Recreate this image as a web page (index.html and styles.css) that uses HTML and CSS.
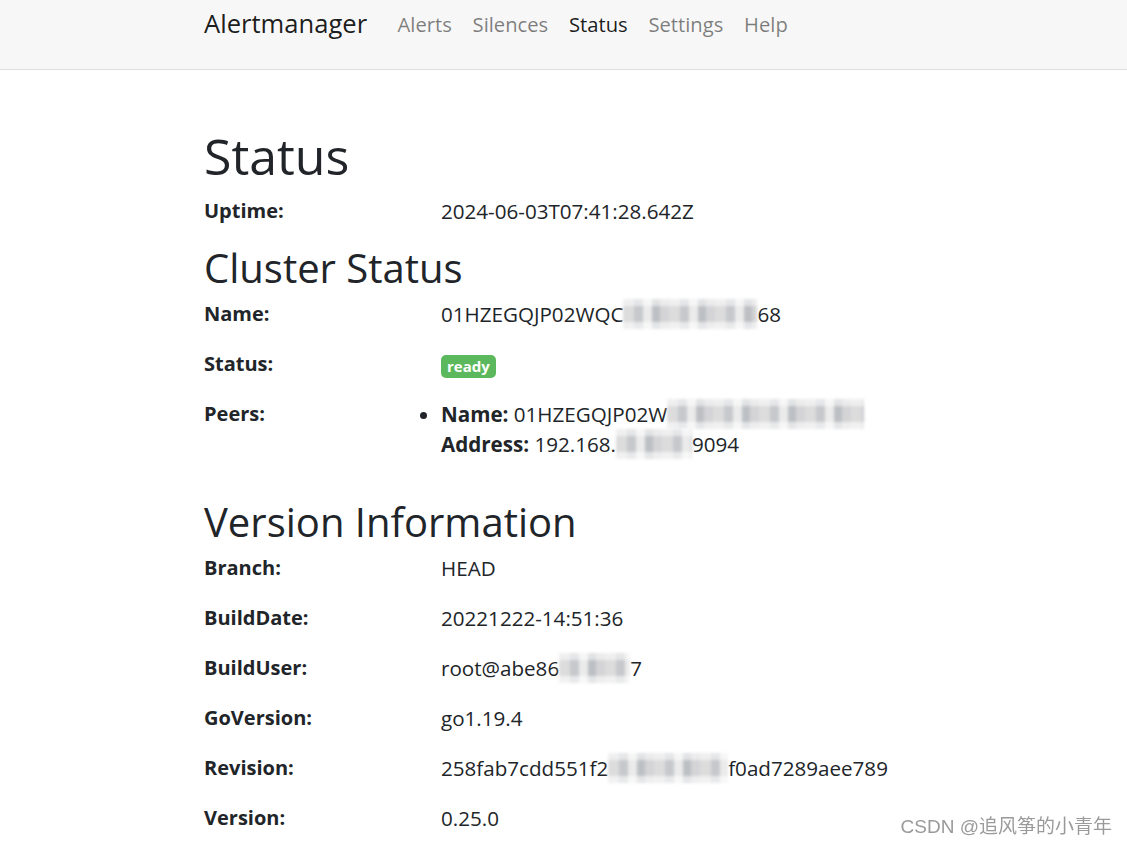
FILE: index.html
```html
<!DOCTYPE html>
<html lang="en">
<head>
<meta charset="utf-8">
<title>Alertmanager</title>
<link rel="stylesheet" href="styles.css">
</head>
<body>
<nav class="navbar">
  <div class="container nav-inner">
    <a class="brand" href="#">Alertmanager</a>
    <ul class="nav">
      <li><a class="nav-link" href="#">Alerts</a></li>
      <li><a class="nav-link" href="#">Silences</a></li>
      <li><a class="nav-link active" href="#">Status</a></li>
      <li><a class="nav-link" href="#">Settings</a></li>
      <li><a class="nav-link" href="#">Help</a></li>
    </ul>
  </div>
</nav>
<main class="container">
  <h1 class="title">Status</h1>
  <div class="fields">
    <div class="label">Uptime:</div><div class="value">2024-06-03T07:41:28.642Z</div>
  </div>
  <h2 class="section cluster">Cluster Status</h2>
  <div class="fields">
    <div class="label">Name:</div><div class="value">01HZEGQJP02WQC<span class="mosaic m-name"></span>68</div>
    <div class="label">Status:</div><div class="value"><span class="badge">ready</span></div>
    <div class="label">Peers:</div>
    <div class="value">
      <ul class="peers">
        <li><b>Name:</b> 01HZEGQJP02W<span class="mosaic m-peer"></span><br><b>Address:</b> 192.168.<span class="mosaic m-addr"></span>9094</li>
      </ul>
    </div>
  </div>
  <h2 class="section version">Version Information</h2>
  <div class="fields">
    <div class="label">Branch:</div><div class="value">HEAD</div>
    <div class="label">BuildDate:</div><div class="value">20221222-14:51:36</div>
    <div class="label">BuildUser:</div><div class="value">root@abe86<span class="mosaic m-user"></span>7</div>
    <div class="label">GoVersion:</div><div class="value">go1.19.4</div>
    <div class="label">Revision:</div><div class="value">258fab7cdd551f2<span class="mosaic m-rev"></span>f0ad7289aee789</div>
    <div class="label">Version:</div><div class="value">0.25.0</div>
  </div>
</main>
<div class="watermark">CSDN @追风筝的小青年</div>
</body>
</html>
```
FILE: styles.css
```css
html, body {
  margin: 0;
  padding: 0;
  background: #ffffff;
}
body {
  font-family: "Open Sans", "Noto Sans", sans-serif;
  font-size: 20px;
  line-height: 30px;
  color: #212529;
}
.container {
  width: 719px;
  margin: 0 auto;
}
.navbar {
  background: #f7f7f7;
  border-bottom: 1px solid #dedede;
  height: 69px;
}
.nav-inner {
  display: flex;
  align-items: center;
  padding-top: 9px;
}
.brand {
  font-size: 25.6px;
  line-height: 30px;
  color: rgba(0, 0, 0, 0.9);
  text-decoration: none;
  margin-right: 20px;
}
.nav {
  display: flex;
  list-style: none;
  margin: 0;
  padding: 0;
}
.nav-link {
  display: block;
  padding: 0 10.4px;
  font-size: 20.2px;
  line-height: 30px;
  color: rgba(0, 0, 0, 0.5);
  text-decoration: none;
}
.nav-link.active {
  color: rgba(0, 0, 0, 0.9);
}
.title {
  font-size: 50px;
  font-weight: 400;
  line-height: 60px;
  margin: 56px 0 10px;
}
.section {
  font-size: 40px;
  font-weight: 400;
  line-height: 48px;
  margin: 0 0 7px;
}
.section.cluster {
  margin-top: 18px;
}
.section.version {
  margin-top: 39px;
}
.fields {
  display: grid;
  grid-template-columns: 237px 1fr;
  row-gap: 20px;
}
.label {
  font-weight: 700;
  line-height: 30px;
}
.value {
  font-size: 20.6px;
  line-height: 30px;
}
.peers {
  margin: 0;
  padding: 0;
}
.peers b {
  font-weight: 700;
}
.badge {
  display: inline-block;
  font-size: 15px;
  font-weight: 700;
  line-height: 1;
  padding: 3.75px 6px;
  border-radius: 5px;
  background: #5cb85c;
  color: #ffffff;
}
.mosaic {
  display: inline-block;
  height: 30px;
  vertical-align: top;
  filter: blur(1.5px);
  background:
    linear-gradient(180deg, rgba(255,255,255,0.55) 0 7px, transparent 7px 23px, rgba(255,255,255,0.6) 23px),
    repeating-linear-gradient(90deg, #dcdcdd 0 11px, #c6c8cb 11px 20px, #ebebeb 20px 29px, #bcbfc3 29px 37px, #d4d4d6 37px 46px);
}
.m-name { width: 134px; }
.m-peer { width: 197px; }
.m-addr { width: 76px; }
.m-user { width: 71px; }
.m-rev { width: 120px; }
.watermark {
  position: fixed;
  right: 15px;
  bottom: 8px;
  font-family: "Liberation Sans", "Noto Sans CJK SC", sans-serif;
  font-size: 19px;
  line-height: 22px;
  color: #9a9a9a;
  text-shadow: 0 0 2px #ffffff;
}
```
